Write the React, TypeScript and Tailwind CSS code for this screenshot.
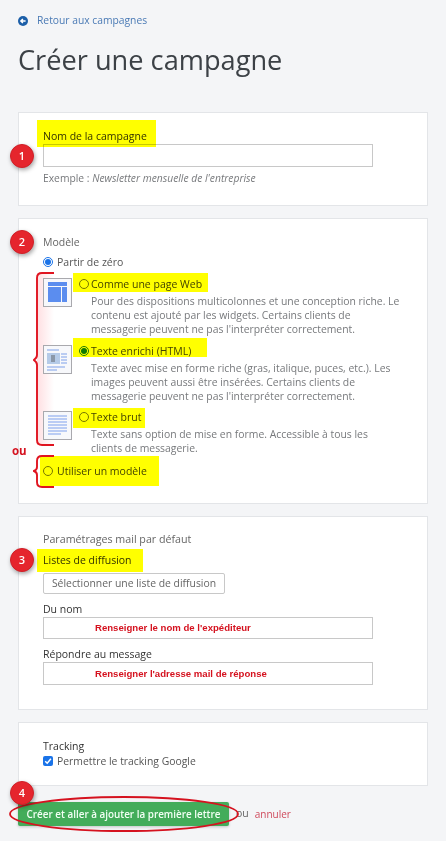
import type { ReactNode } from "react";

const Badge = ({ n, className }: { n: number; className: string }) => (
  <span
    className={`absolute w-[24px] h-[24px] rounded-full bg-[#e5252d] border border-[#d01f27] text-white text-[11px] font-semibold flex items-center justify-center shadow-[1px_2px_4px_rgba(0,0,0,0.35)] z-10 ${className}`}
  >
    {n}
  </span>
);

const Mark = ({ className, children }: { className: string; children: ReactNode }) => (
  <span className="relative block w-fit">
    <span className={`absolute bg-[#ffff00] mix-blend-multiply z-[5] ${className}`} />
    {children}
  </span>
);

const Radio = ({ checked, green }: { checked?: boolean; green?: boolean }) => (
  <span
    className={`w-[10px] h-[10px] rounded-full border shrink-0 flex items-center justify-center bg-white ${
      checked ? (green ? "border-[#1f7a1f]" : "border-[#1a73e8]") : "border-[#767676]"
    }`}
  >
    {checked && <span className={`w-[6px] h-[6px] rounded-full ${green ? "bg-[#0f7a0f]" : "bg-[#1a73e8]"}`} />}
  </span>
);

const IconBox = ({ children }: { children: ReactNode }) => (
  <svg width="29" height="29" viewBox="0 0 29 29" className="relative shrink-0 block mt-[1px]">
    <rect x="0.5" y="0.5" width="28" height="28" fill="#f7f8fb" stroke="#a9a9ae" />
    {children}
  </svg>
);

const Option = ({
  icon,
  title,
  lines,
  green,
  mark,
  className,
}: {
  icon: ReactNode;
  title: string;
  lines: string[];
  green?: boolean;
  mark: string;
  className?: string;
}) => (
  <div className={`flex gap-[7px] ${className ?? ""}`}>
    <IconBox>{icon}</IconBox>
    <div>
      <Mark className={mark}>
        <span className="flex items-center gap-[2px] text-[#444] leading-[14px]">
          <Radio checked={green} green={green} />
          {title}
        </span>
      </Mark>
      <p className="pl-[12px] mt-[3px] text-[10.4px] leading-[14px] text-[#77797c]">
        {lines.map((l) => (
          <span key={l} className="block whitespace-nowrap">
            {l}
          </span>
        ))}
      </p>
    </div>
  </div>
);

export default function App() {
  const card = "bg-white border border-[#e3e5e8] pl-[24px]";
  const field = "block w-[330px] bg-white border border-[#c8c8c8]";
  const hint = "font-['Liberation_Sans',sans-serif] font-bold text-[9.6px] text-[#d5121f]";

  return (
    <div className="relative w-[446px] h-[841px] overflow-hidden bg-[#f4f5f7] px-[18px] pt-[14px] font-['Open_Sans',sans-serif] text-[10.5px] text-[#444]">
      <a className="flex items-center gap-[9px] h-[14px] text-[#4a7ab5] text-[10.3px]">
        <svg width="10" height="10" viewBox="0 0 10 10">
          <circle cx="5" cy="5" r="5" fill="#1c5fa8" />
          <path d="M7.6 5H3M4.9 3 2.9 5l2 2" fill="none" stroke="#fff" strokeWidth="1.5" />
        </svg>
        Retour aux campagnes
      </a>
      <h1 className="mt-[12px] text-[27.2px] leading-[40px] text-[#3c4146]">Créer une campagne</h1>

      <section className={`${card} relative mt-[32px] h-[94px] pt-[16px]`}>
        <Badge n={1} className="left-[-9px] top-[31px]" />
        <Mark className="left-[-6px] right-[-9px] top-[-9px] bottom-[-4px]">
          <label className="block text-[#333] leading-[14px]">Nom de la campagne</label>
        </Mark>
        <input className={`${field} h-[23px] mt-[1px]`} />
        <p className="mt-[4px] leading-[14px] text-[#77797c] text-[10.3px]">
          Exemple : <em>Newsletter mensuelle de l'entreprise</em>
        </p>
      </section>

      <section className={`${card} relative mt-[12px] h-[286px] pt-[16px]`}>
        <Badge n={2} className="left-[-9px] top-[11px]" />
        <p className="leading-[14px] text-[#666]">Modèle</p>
        <label className="flex items-center gap-[4px] mt-[6px] leading-[14px] text-[#555]">
          <Radio checked />
          Partir de zéro
        </label>

        <div className="absolute left-[18px] top-[54px] w-[17px] h-[172px] bg-gradient-to-r from-[#ffdfe2] to-white" />
        <svg className="absolute left-[14px] top-[52px] z-[6]" width="24" height="220" viewBox="0 0 24 220">
          <path
            d="M21 2H9Q4 2 4 7V84Q4 87 0.8 89Q4 91 4 94V169Q4 174 9 174H21M21 185H9Q4 185 4 190V196Q4 199 0.8 200Q4 201 4 204V211Q4 216 9 216H21"
            fill="none"
            stroke="#e01420"
            strokeWidth="1.9"
          />
        </svg>

        <Option
          className="mt-[8px]"
          mark="left-[-6px] right-[-6px] top-[-4px] bottom-[-1px]"
          title="Comme une page Web"
          lines={[
            "Pour des dispositions multicolonnes et une conception riche. Le",
            "contenu est ajouté par les widgets. Certains clients de",
            "messagerie peuvent ne pas l'interpréter correctement.",
          ]}
          icon={
            <>
              <rect x="5" y="4" width="19" height="20" fill="#5b8def" />
              <path d="M5 8.5h19M18.5 8.5V24" stroke="#f7f8fb" strokeWidth="1" />
            </>
          }
        />
        <Option
          className="mt-[8px]"
          green
          mark="left-[-6px] right-[-16px] top-[-6px] bottom-[1px]"
          title="Texte enrichi (HTML)"
          lines={[
            "Texte avec mise en forme riche (gras, italique, puces, etc.). Les",
            "images peuvent aussi être insérées. Certains clients de",
            "messagerie peuvent ne pas l'interpréter correctement.",
          ]}
          icon={
            <>
              <path d="M4 5h12M4 22h18M4 25h10" stroke="#7fa0ea" strokeWidth="1.2" />
              <rect x="4" y="8" width="13" height="11" fill="#b5cbe8" />
              <rect x="8" y="10" width="4" height="7" fill="#8a97a8" />
              <path d="M18 9h6M18 12h6M18 15h6M18 18h6" stroke="#7fa0ea" strokeWidth="1.2" />
            </>
          }
        />
        <Option
          className="mt-[7px]"
          mark="left-[-6px] right-[-4px] top-[-2px] bottom-[-4px]"
          title="Texte brut"
          lines={["Texte sans option de mise en forme. Accessible à tous les", "clients de messagerie."]}
          icon={
            <path
              d="M5 5h19M5 8h19M5 11h19M5 14h19M5 17h19M5 20h19M5 23h13"
              stroke="#7f9fee"
              strokeWidth="1.2"
            />
          }
        />
        <span className="absolute left-[-7px] top-[225px] text-[11.5px] leading-[14px] font-bold text-[#d5121f]">ou</span>
        <div className="mt-[9px]">
          <Mark className="left-[-3px] right-[-12px] top-[-8px] bottom-[-8px]">
            <label className="flex items-center gap-[4px] leading-[14px] text-[#444]">
              <Radio />
              Utiliser un modèle
            </label>
          </Mark>
        </div>
      </section>

      <section className={`${card} relative mt-[12px] h-[194px] pt-[15px]`}>
        <Badge n={3} className="left-[-9px] top-[31px]" />
        <p className="leading-[14px] text-[#666] text-[10.7px]">Paramétrages mail par défaut</p>
        <div className="mt-[7px]">
          <Mark className="left-[-6px] right-[-11px] top-[-4px] bottom-[-5px]">
            <label className="block leading-[14px] text-[#333]">Listes de diffusion</label>
          </Mark>
        </div>
        <button className="block mt-[6px] w-[182px] h-[21px] bg-white border border-[#c8c8c8] rounded-[2px] text-[#666] text-[10.4px]">
          Sélectionner une liste de diffusion
        </button>
        <label className="block mt-[8px] leading-[14px] text-[#333]">Du nom</label>
        <div className={`${field} ${hint} h-[22px] mt-[1px] pl-[51px] leading-[20px]`}>Renseigner le nom de l'expéditeur</div>
        <label className="block mt-[8px] leading-[14px] text-[#333]">Répondre au message</label>
        <div className={`${field} ${hint} h-[23px] mt-[1px] pl-[51px] leading-[22px]`}>Renseigner l'adresse mail de réponse</div>
      </section>

      <section className={`${card} mt-[12px] h-[64px] pt-[16px]`}>
        <p className="leading-[14px] text-[#333]">Tracking</p>
        <label className="flex items-center gap-[4px] leading-[16px] text-[#555] text-[10.4px]">
          <span className="w-[10px] h-[10px] rounded-[2px] bg-[#1a73e8] flex items-center justify-center">
            <svg width="8" height="8" viewBox="0 0 8 8">
              <path d="M1.2 4.2 3.2 6.2 6.9 1.8" fill="none" stroke="#fff" strokeWidth="1.5" />
            </svg>
          </span>
          Permettre le tracking Google
        </label>
      </section>

      <div className="relative flex items-center mt-[16px] h-[24px]">
        <button className="w-[211px] h-[24px] bg-[#43ac5a] rounded-[2px] text-[9.9px] font-semibold text-[#f2fff4] whitespace-nowrap shadow-[0_1px_3px_rgba(0,0,0,0.2)]">
          Créer et aller à ajouter la première lettre
        </button>
        <span className="ml-[7px] text-[#666]">ou</span>
        <a className="ml-[6px] text-[#cf4a5c] text-[10px]">annuler</a>
        <Badge n={4} className="left-[-8px] top-[-21px]" />
        <svg className="absolute left-[-9px] top-[-7px]" width="232" height="38" viewBox="0 0 232 38">
          <ellipse cx="115" cy="19" rx="114" ry="17" fill="none" stroke="#d5121f" strokeWidth="1.8" />
        </svg>
      </div>
    </div>
  );
}
